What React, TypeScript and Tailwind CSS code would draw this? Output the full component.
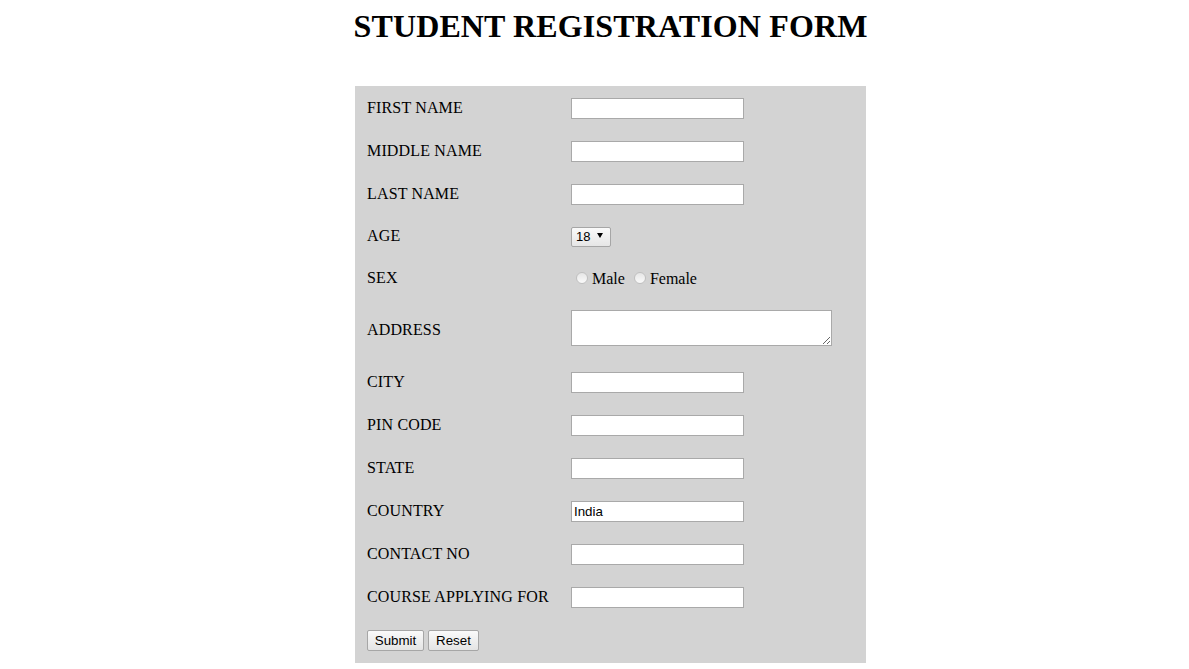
import { useState } from "react";

const serif = "font-['Liberation_Serif','Times_New_Roman',serif]";
const sans = "font-['Liberation_Sans',Arial,sans-serif]";

function TextRow({ label, value = "" }: { label: string; value?: string }) {
  const [v, setV] = useState(value);
  return (
    <div className="flex items-center h-[41px] px-[12px]">
      <div className="w-[204px] text-[16px] tracking-[0.15px] text-black -mt-[2px]">{label}</div>
      <input
        className={`w-[173px] h-[21px] bg-white border border-[#a9a9a9] px-[2px] text-[13.33px] text-black outline-none ${sans}`}
        value={v}
        onChange={(e) => setV(e.target.value)}
      />
    </div>
  );
}

export default function App() {
  const [sex, setSex] = useState("");

  return (
    <div className={`min-h-screen bg-white ${serif}`}>
      <div className="flex justify-center pl-[32px]">
        <div className="w-[511px] flex flex-col items-center">
          <h1 className="mt-[8px] text-[32px] leading-[36px] font-bold tracking-[0.12px] text-black whitespace-nowrap">
            STUDENT REGISTRATION FORM
          </h1>

          <form className="mt-[42px] w-[511px] bg-[#d3d3d3] py-[2px] flex flex-col gap-[2px]">
            <TextRow label="FIRST NAME" />
            <TextRow label="MIDDLE NAME" />
            <TextRow label="LAST NAME" />

            <div className="flex items-center h-[41px] px-[12px]">
              <div className="w-[204px] text-[16px] tracking-[0.15px] -mt-[4px]">AGE</div>
              <div className="relative -mt-[4px]">
                <select
                  defaultValue="18"
                  className={`appearance-none w-[40px] h-[20px] border border-[#a6a6a6] rounded-[2px] bg-gradient-to-b from-[#fafafa] to-[#e6e6e6] pl-[4px] text-[13px] leading-[18px] text-black outline-none ${sans}`}
                >
                  {Array.from({ length: 13 }, (_, i) => 18 + i).map((n) => (
                    <option key={n} value={String(n)}>
                      {n}
                    </option>
                  ))}
                </select>
                <svg
                  className="pointer-events-none absolute right-[8px] top-[9px]"
                  width="6"
                  height="5"
                  viewBox="0 0 6 5"
                >
                  <polygon points="0,0 6,0 3,5" fill="#000" />
                </svg>
              </div>
            </div>

            <div className="flex items-center h-[41px] px-[12px]">
              <div className="w-[204px] text-[16px] tracking-[0.15px] -mt-[5px]">SEX</div>
              <label className="flex items-center text-[16px] -mt-[3px]">
                <input
                  type="radio"
                  name="sex"
                  checked={sex === "male"}
                  onChange={() => setSex("male")}
                  className="appearance-none ml-[5px] mr-[4px] w-[12px] h-[12px] rounded-full border border-[#c0c0c0] bg-gradient-to-b from-[#e6e6e6] to-[#fafafa] -mt-[3px]"
                />
                Male
              </label>
              <label className="flex items-center text-[16px] ml-[9px] -mt-[3px]">
                <input
                  type="radio"
                  name="sex"
                  checked={sex === "female"}
                  onChange={() => setSex("female")}
                  className="appearance-none mr-[4px] w-[12px] h-[12px] rounded-full border border-[#c0c0c0] bg-gradient-to-b from-[#e6e6e6] to-[#fafafa] -mt-[3px]"
                />
                Female
              </label>
            </div>

            <div className="flex items-center h-[57px] px-[12px] pb-[8px]">
              <div className="w-[204px] text-[16px] tracking-[0.15px] mt-[4px]">ADDRESS</div>
              <textarea
                className={`w-[261px] h-[36px] bg-white border border-[#a9a9a9] text-[13px] outline-none ${sans}`}
              />
            </div>

            <TextRow label="CITY" />
            <TextRow label="PIN CODE" />
            <TextRow label="STATE" />
            <TextRow label="COUNTRY" value="India" />
            <TextRow label="CONTACT NO" />
            <TextRow label="COURSE APPLYING FOR" />

            <div className={`flex items-center h-[41px] px-[12px] gap-[4px] ${sans}`}>
              <button
                type="submit"
                onClick={(e) => e.preventDefault()}
                className="w-[57px] h-[21px] border border-[#a6a6a6] rounded-[2px] bg-gradient-to-b from-[#fafafa] to-[#e4e4e4] text-[13.33px] text-black"
              >
                Submit
              </button>
              <button
                type="reset"
                className="w-[51px] h-[21px] border border-[#a6a6a6] rounded-[2px] bg-gradient-to-b from-[#fafafa] to-[#e4e4e4] text-[13.33px] text-black"
              >
                Reset
              </button>
            </div>
          </form>
        </div>
      </div>
    </div>
  );
}
